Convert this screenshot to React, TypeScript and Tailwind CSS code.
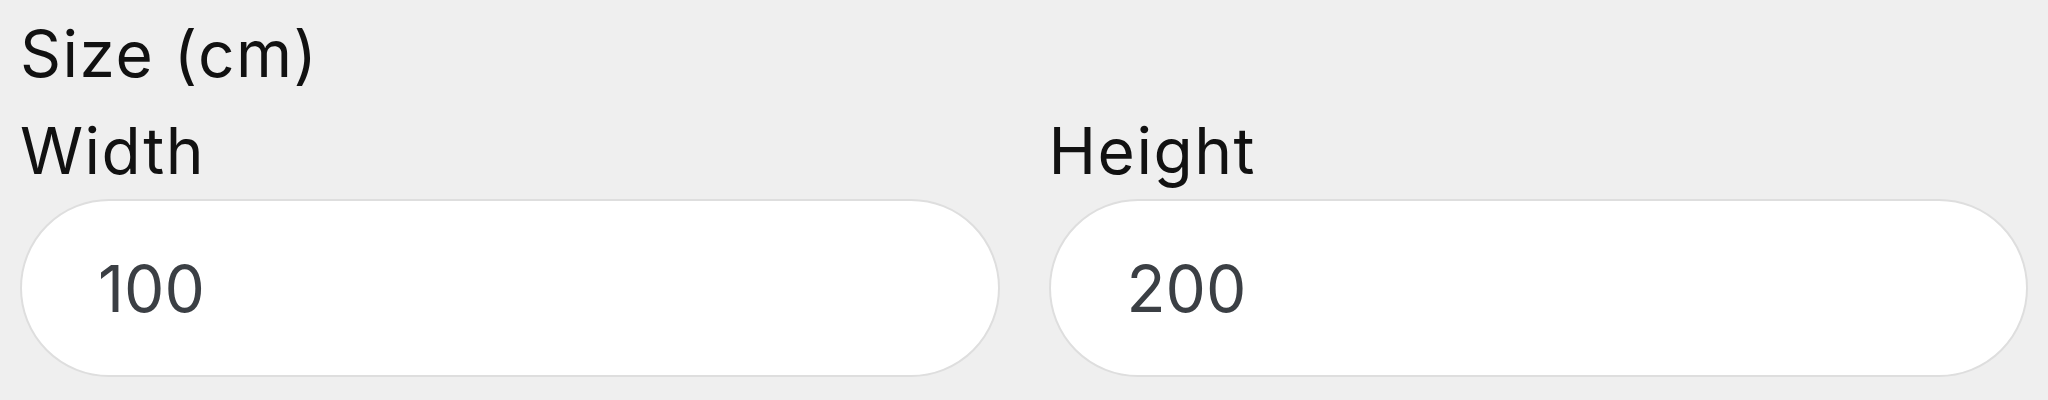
import { useState } from "react";

function SizeField({ label, value }: { label: string; value: string }) {
  const [v, setV] = useState(value);
  return (
    <label className="flex flex-col">
      <span className="leading-[97px] text-[64px] tracking-[1.5px] text-[#111]">{label}</span>
      <input
        value={v}
        onChange={(e) => setV(e.target.value)}
        className="h-[178px] w-full rounded-full border-2 border-[#dedede] bg-white pl-[76px] text-[64px] text-[#3b3f44] outline-none"
      />
    </label>
  );
}

export default function App() {
  return (
    <div
      className="min-h-[400px] bg-[#efefef] px-[20px] pt-[5px]"
      style={{ fontFamily: "Inter, 'Noto Sans', sans-serif" }}
    >
      <div className="leading-[97px] text-[64px] tracking-[1.5px] text-[#111]">Size (cm)</div>
      <div className="grid grid-cols-2 gap-[49px]">
        <SizeField label="Width" value="100" />
        <SizeField label="Height" value="200" />
      </div>
    </div>
  );
}
